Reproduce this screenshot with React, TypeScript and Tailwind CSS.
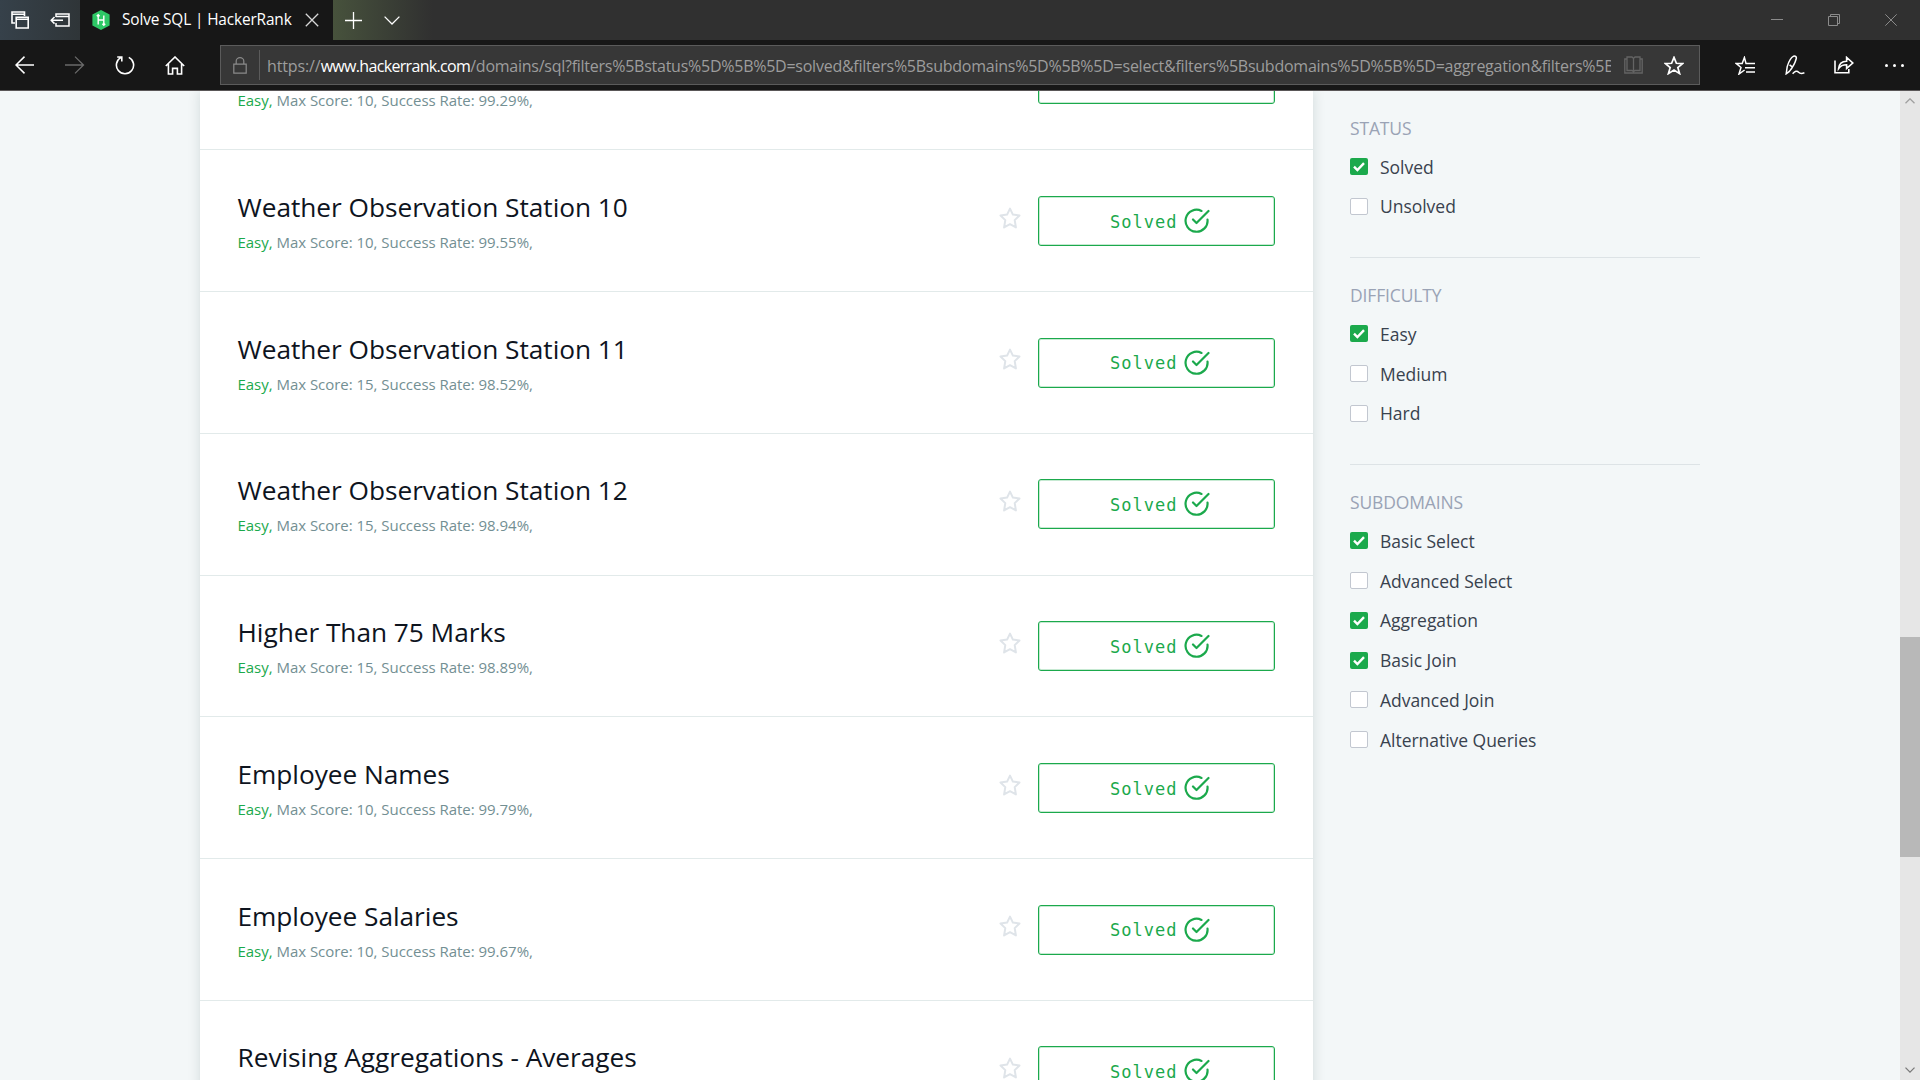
import React from "react";

type Challenge = { title: string; score: number; rate: string };

const challenges: Challenge[] = [
  { title: "Weather Observation Station 9", score: 10, rate: "99.29" },
  { title: "Weather Observation Station 10", score: 10, rate: "99.55" },
  { title: "Weather Observation Station 11", score: 15, rate: "98.52" },
  { title: "Weather Observation Station 12", score: 15, rate: "98.94" },
  { title: "Higher Than 75 Marks", score: 15, rate: "98.89" },
  { title: "Employee Names", score: 10, rate: "99.79" },
  { title: "Employee Salaries", score: 10, rate: "99.67" },
  { title: "Revising Aggregations - Averages", score: 10, rate: "99.66" },
];

const groups = [
  { name: "STATUS", items: [["Solved", true], ["Unsolved", false]] },
  { name: "DIFFICULTY", items: [["Easy", true], ["Medium", false], ["Hard", false]] },
  {
    name: "SUBDOMAINS",
    items: [
      ["Basic Select", true],
      ["Advanced Select", false],
      ["Aggregation", true],
      ["Basic Join", true],
      ["Advanced Join", false],
      ["Alternative Queries", false],
    ],
  },
] as { name: string; items: [string, boolean][] }[];

function Icon({ w, h, className = "", sw = 1.3, children }: { w: number; h: number; className?: string; sw?: number; children: React.ReactNode }) {
  return (
    <svg width={w} height={h} viewBox={`0 0 ${w} ${h}`} fill="none" stroke="currentColor" strokeWidth={sw} className={`shrink-0 ${className}`}>
      {children}
    </svg>
  );
}

const STAR = "M10 1.4 12.4 7.3 18.6 7.6 13.8 11.6 15.6 17.6 10 14.1 4.4 17.6 6.2 11.6 1.4 7.6 7.6 7.3Z";

function TabBar() {
  return (
    <div className="flex h-10 bg-[#303030] text-white">
      <div className="flex w-20 items-center bg-gradient-to-r from-[#36414a] to-[#2f3538]">
        <Icon w={18} h={18} className="ml-[11px]" sw={1.6}>
          <path d="M4 12H1V1h12.5v4M1 3.3h12.5" />
          <path d="M5.2 6.2h12v10.8h-12zM5.2 8.2h12" />
        </Icon>
        <Icon w={20} h={14} className="ml-[21px]" sw={1.5}>
          <path d="M6 4V1h13v12H6v-3M6 3.5h13M1 7.3h12M4.5 4 1.2 7.3l3.3 3.3" />
        </Icon>
      </div>
      <div className="flex w-[253px] items-center bg-[#171717]">
        <svg width="18" height="20" viewBox="0 0 18 20" className="ml-3 shrink-0">
          <path d="M9 0 17.6 4.6v10.8L9 20 .4 15.4V4.6Z" fill="#2ec866" />
          <path d="M6.2 5v9.5M11.8 5.5V15M6.2 10h5.6M4.8 6.3 6.2 4.7l1.4 1.6M10.4 13.7l1.4 1.6 1.4-1.6" stroke="#fff" strokeWidth="1.4" fill="none" />
        </svg>
        <span className="ml-3 w-[170px] whitespace-nowrap font-['Open_Sans'] text-[15.4px] tracking-[-0.14px]">Solve SQL | HackerRank</span>
        <Icon w={14} h={14} className="ml-[13px] text-[#d8d8d8]">
          <path d="M.8.8l12.4 12.4M13.2.8.8 13.2" />
        </Icon>
      </div>
      <div className="flex w-[100px] items-center bg-gradient-to-r from-[#47523c] to-[#303030]">
        <Icon w={17} h={17} className="ml-3 mt-[1px]">
          <path d="M8.500 0v17M0 8.500h17" />
        </Icon>
        <Icon w={16} h={9} className="ml-[22px]">
          <path d="M.6.6 8 8 15.4.6" />
        </Icon>
      </div>
      <div className="ml-auto flex items-center text-[#8b8b8b]">
        <Icon w={12} h={2} sw={1} className="mr-[45px]">
          <path d="M0 .5h12" />
        </Icon>
        <Icon w={12} h={12} sw={1} className="mr-[45px]">
          <path d="M.5 2.5h9v9h-9zM2.5 2.5v-2h9v9h-2" />
        </Icon>
        <Icon w={12} h={12} sw={1} className="mr-[23px]">
          <path d="M.3.3l11.4 11.4M11.7.3.3 11.7" />
        </Icon>
      </div>
    </div>
  );
}

function AddressBar() {
  return (
    <div className="flex h-[51px] items-center border-b border-[#5a5758] bg-[#171717] text-white">
      <Icon w={20} h={18} sw={1.5} className="-mt-px ml-[15px]">
        <path d="M19 9H1M9.5.6 1 9l8.5 8.4" />
      </Icon>
      <Icon w={20} h={18} sw={1.3} className="-mt-px ml-[30px] text-[#6a6a6a]">
        <path d="M0 9h18.5M10 .6 18.5 9 10 17.4" />
      </Icon>
      <Icon w={20} h={20} sw={1.6} className="ml-[30px]">
        <path d="M6.200 2.400A8.600 8.600 0 1 0 13.800 2.400M2.200 2h4.600v4.600" />
      </Icon>
      <Icon w={20} h={19} sw={1.6} className="ml-[30px]">
        <path d="M.8 10 10 1l9.2 9M3.4 8v10h4.2v-5.6h4.8V18h4.2V8" />
      </Icon>
      <div className="ml-[35px] flex h-10 w-[1480px] items-center border border-[#5b5b5b] bg-[#373737]">
        <Icon w={14} h={17} sw={1.2} className="ml-[12px] text-[#8a8a8a]">
          <path d="M.8 7.2h12.4v9H.8zM3.2 7V4a3.8 3.3 0 0 1 7.6 0v3" />
        </Icon>
        <div className="ml-[12px] h-[30px] w-px bg-[#5b5b5b]" />
        <div className="ml-[7px] w-[1344px] overflow-hidden whitespace-nowrap pt-[2px] font-['Open_Sans'] text-[16px] tracking-[-0.25px] text-[#9d9d9d]">
          <span className="tracking-[-0.120px]">https://</span>
          <span className="tracking-[-0.670px] text-white">www.hackerrank.com</span>
          /domains/sql?filters%5Bstatus%5D%5B%5D=solved&amp;filters%5Bsubdomains%5D%5B%5D=select&amp;filters%5Bsubdomains%5D%5B%5D=aggregation&amp;filters%5B
        </div>
        <Icon w={19} h={18} sw={1.3} className="ml-[13px] text-[#646464]">
          <path d="M9.5 2.5v13M3 1h5l1.5 1.4L11 1h5v13.5h-5l-1.5 1.2L8 14.5H3zM3 3H.8v14h17.4V3H16" />
        </Icon>
        <Icon w={20} h={19} sw={1.7} className="ml-[21px]">
          <path d={STAR} />
        </Icon>
      </div>
      <Icon w={20} h={19} sw={1.5} className="ml-[35px]">
        <path d="M12.4 7.4H11L9.4 1.5 7.2 7.4H1l5 4-2 6.6 5.6-4M11.6 7.4H20M10 11.7h10M11 16h9" />
      </Icon>
      <Icon w={20} h={20} sw={1.5} className="ml-[30px]">
        <path d="M1.200 18.800 2.200 11.600C3.600 7 6 2.600 8.600 1.200c1.800-.6 3.200.8 2.600 2.600C10 8.600 7 13.200 4.400 16.400ZM4.600 9.800l2.600 2M7.600 18.800c2.400-2.800 4.400-3.400 6-1.600 1.600 1.800 3 1.600 5.800.6" />
      </Icon>
      <Icon w={20} h={18} sw={1.6} className="ml-[29px]">
        <path d="M1 4.600V16.800h13.800V13M4.600 12.600C5 8 8 5.200 12.600 5.200V1.400L18.800 7l-6.200 5.400V8.800c-4 0-6.200 1.200-8 3.800Z" />
      </Icon>
      <div className="ml-[31px] flex gap-[5px]">
        <i className="size-[3px] rounded-full bg-white" />
        <i className="size-[3px] rounded-full bg-white" />
        <i className="size-[3px] rounded-full bg-white" />
      </div>
    </div>
  );
}

function Row({ c }: { c: Challenge }) {
  return (
    <div className="flex h-[141.750px] shrink-0 border-b border-[#e2eaea] pl-[37.500px] pr-[38px]">
      <div className="flex-1 pt-[38.600px] font-['Open_Sans']">
        <div className="h-[36px] whitespace-nowrap text-[26.250px] leading-[36px] tracking-[-0.030px] text-[#0e141e]">{c.title}</div>
        <div className="mt-[7px] h-5 whitespace-nowrap text-[15px] leading-5 tracking-[-0.030px] text-[#738f93]">
          <span className="text-[#1ba94c]">Easy,</span> Max Score: {c.score}, Success Rate: {c.rate}%,
        </div>
      </div>
      <Icon w={22} h={22} sw={2} className="mr-[17px] mt-[56.200px] text-[#dfe4e9]">
        <path strokeLinejoin="round" d="M11 1.600 13.900 7.600 20.500 8.500 15.700 13.100 16.900 20.400 11 17.200 5.100 20.400 6.300 13.100 1.500 8.500 8.100 7.600Z" />
      </Icon>
      <button className="mt-[45.600px] flex h-[50px] w-[237px] items-center rounded-[3px] border border-[#1ba94c] pl-[71px] font-['DejaVu_Sans_Mono'] text-[17px] tracking-[1px] text-[#1ba94c] shadow-[inset_0_0_0_1px_rgba(27,169,76,0.25)]">
        <span className="pt-[3px]">Solved</span>
        <Icon w={26} h={26} sw={2.200} className="ml-[7px]">
          <path strokeLinecap="round" strokeLinejoin="round" d="M17.500 2.900A11 11 0 1 0 23.500 11.500M24.500 3 12.500 15 9 11.500" />
        </Icon>
      </button>
    </div>
  );
}

function Filters() {
  return (
    <aside className="ml-[37px] w-[350px] pt-[20.750px] font-['Open_Sans']">
      {groups.map((g, i) => (
        <section key={g.name} className={i < 2 ? "mb-[21px] border-b border-[#dde3e6] pb-[30.750px]" : ""}>
          <h3 className="mb-[3px] h-8 text-[17.500px] leading-8 tracking-[-0.150px] text-[#9aa3b5]">{g.name}</h3>
          {g.items.map(([label, on]) => (
            <label key={label} className="flex h-[39.750px] items-center">
              {on ? (
                <svg width="18" height="17" viewBox="0 0 18 17" className="shrink-0">
                  <rect width="18" height="17" rx="2" fill="#1ba94c" />
                  <path d="M4 8.600 7.400 12 14 5.200" fill="none" stroke="#fff" strokeWidth="2.400" />
                </svg>
              ) : (
                <span className="h-[17px] w-[18px] shrink-0 rounded-[2px] border border-[#c2c7d0] bg-white" />
              )}
              <span className="ml-3 whitespace-nowrap text-[17.500px] tracking-[-0.030px] text-[#39424e]">{label}</span>
            </label>
          ))}
        </section>
      ))}
    </aside>
  );
}

function Scrollbar() {
  return (
    <div className="ml-auto flex w-5 flex-col items-center bg-[#e6e6e6] text-[#7a7a7a]">
      <Icon w={10} h={6} className="mt-[7px] text-[#a0a0a0]">
        <path d="M.5 5.300 5 .8l4.500 4.500" />
      </Icon>
      <div className="mt-[533px] h-[220px] w-5 bg-[#b8b8b8]" />
      <Icon w={10} h={6} className="mb-[7px] mt-auto">
        <path d="M.5.6 5 5.100 9.500.6" />
      </Icon>
    </div>
  );
}

export default function App() {
  return (
    <div className="flex h-[1080px] w-[1920px] flex-col overflow-hidden bg-[#f3f7f7]">
      <TabBar />
      <AddressBar />
      <div className="flex h-[989px] overflow-hidden bg-[#f3f7f8]">
        <main className="ml-[200px] flex h-[1100px] w-[1113px] flex-col bg-white shadow-[0_0_12px_rgba(0,40,40,0.14)]">
          <div className="-mt-[82.400px] flex flex-col">
            {challenges.map((c) => (
              <Row key={c.title} c={c} />
            ))}
          </div>
        </main>
        <Filters />
        <Scrollbar />
      </div>
    </div>
  );
}
